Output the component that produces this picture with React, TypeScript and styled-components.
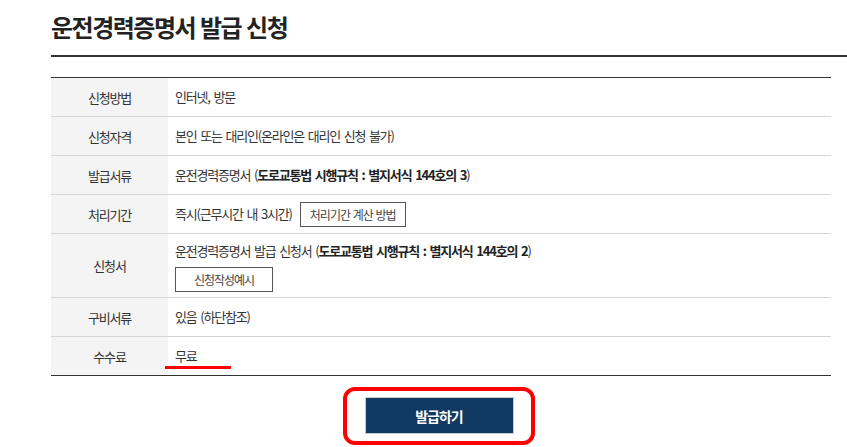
import styled, { createGlobalStyle } from 'styled-components';

const GlobalStyle = createGlobalStyle`
  html, body {
    margin: 0;
    padding: 0;
    background: #fff;
    overflow: hidden;
  }
  body {
    font-family: "Noto Sans CJK KR", "Noto Sans", sans-serif;
    color: #333;
  }
`

type Row = {
  label: string;
  content: React.ReactNode;
  tall?: boolean;
}

export default function App() {
  const rows: Row[] = [
    { label: '신청방법', content: <Line>인터넷, 방문</Line> },
    { label: '신청자격', content: <Line>본인 또는 대리인(온라인은 대리인 신청 불가)</Line> },
    {
      label: '발급서류',
      content: <Line>운전경력증명서 (<b>도로교통법 시행규칙 : 별지서식 144호의 3</b>)</Line>,
    },
    {
      label: '처리기간',
      content: (
        <Inline>
          <Line>즉시(근무시간 내 3시간)</Line>
          <SmallButton $width={106}>처리기간 계산 방법</SmallButton>
        </Inline>
      ),
    },
    {
      label: '신청서',
      tall: true,
      content: (
        <Stack>
          <Line>운전경력증명서 발급 신청서 (<b>도로교통법 시행규칙 : 별지서식 144호의 2</b>)</Line>
          <SmallButton $width={98}>신청작성예시</SmallButton>
        </Stack>
      ),
    },
    { label: '구비서류', content: <Line>있음 (하단참조)</Line> },
    { label: '수수료', content: <Line><Marked>무료</Marked></Line> },
  ];

  return (
    <>
      <GlobalStyle />
      <Page>
        <Title>운전경력증명서 발급 신청</Title>
        <InfoTable>
          {rows.map((r) => (
            <TableRow key={r.label}>
              <LabelCell>{r.label}</LabelCell>
              <ContentCell $tall={r.tall}>{r.content}</ContentCell>
            </TableRow>
          ))}
        </InfoTable>
        <Actions>
          <Highlight>
            <IssueButton>발급하기</IssueButton>
          </Highlight>
        </Actions>
      </Page>
    </>
  )
}

const Page = styled.div`
  padding: 9px 0 0 51px;
`

const Title = styled.h1`
  margin: 0;
  width: 820px;
  padding-bottom: 11px;
  border-bottom: 2px solid #333;
  font-size: 24px;
  font-weight: 700;
  line-height: 35px;
  letter-spacing: -1.5px;
  word-spacing: 1px;
  color: #222;
`

const InfoTable = styled.div`
  margin-top: 20px;
  width: 780px;
  border-top: 1px solid #333;
  border-bottom: 1px solid #333;
`

const TableRow = styled.div`
  display: grid;
  grid-template-columns: 117px 1fr;
  border-bottom: 1px solid #d5d5d5;

  &:last-child {
    border-bottom: none;
  }
`

const LabelCell = styled.div`
  display: flex;
  align-items: center;
  justify-content: center;
  background: #f4f4f4;
  font-size: 13px;
  letter-spacing: -1.2px;
  color: #333;
`

const ContentCell = styled.div<{ $tall?: boolean }>`
  display: flex;
  align-items: center;
  height: ${(p) => (p.$tall ? 63 : 38)}px;
  box-sizing: border-box;
  padding: 0 7px;
`

const Line = styled.span`
  font-size: 13px;
  letter-spacing: -1.2px;
  word-spacing: 2px;
  color: #333;
  line-height: 20px;

  b {
    font-weight: 700;
    color: #222;
  }
`

const Inline = styled.div`
  display: flex;
  align-items: center;
  gap: 8px;
`

const Stack = styled.div`
  display: flex;
  flex-direction: column;
  align-items: flex-start;
  gap: 6px;
  padding-top: 1px;
`

const SmallButton = styled.button<{ $width: number }>`
  width: ${(p) => p.$width}px;
  height: 25px;
  padding: 0;
  border: 1px solid #555;
  background: #fff;
  font-family: inherit;
  font-size: 12px;
  letter-spacing: -1px;
  word-spacing: 1px;
  color: #444;
`

const Marked = styled.span`
  position: relative;

  &::after {
    content: '';
    position: absolute;
    left: -10px;
    bottom: -4px;
    width: 66px;
    height: 3px;
    background: #f00;
  }
`

const Actions = styled.div`
  width: 780px;
  display: flex;
  justify-content: center;
  padding-top: 11px;
`

const Highlight = styled.div`
  padding: 6px 17px 7px 18px;
  border: 4px solid #f00;
  border-radius: 12px;
  margin-right: 5px;
`

const IssueButton = styled.button`
  display: block;
  width: 149px;
  height: 37px;
  border: 1px solid #c8ccd2;
  background: #103a62;
  color: #fff;
  font-family: inherit;
  font-size: 14px;
  font-weight: 700;
  letter-spacing: -1px;
`
